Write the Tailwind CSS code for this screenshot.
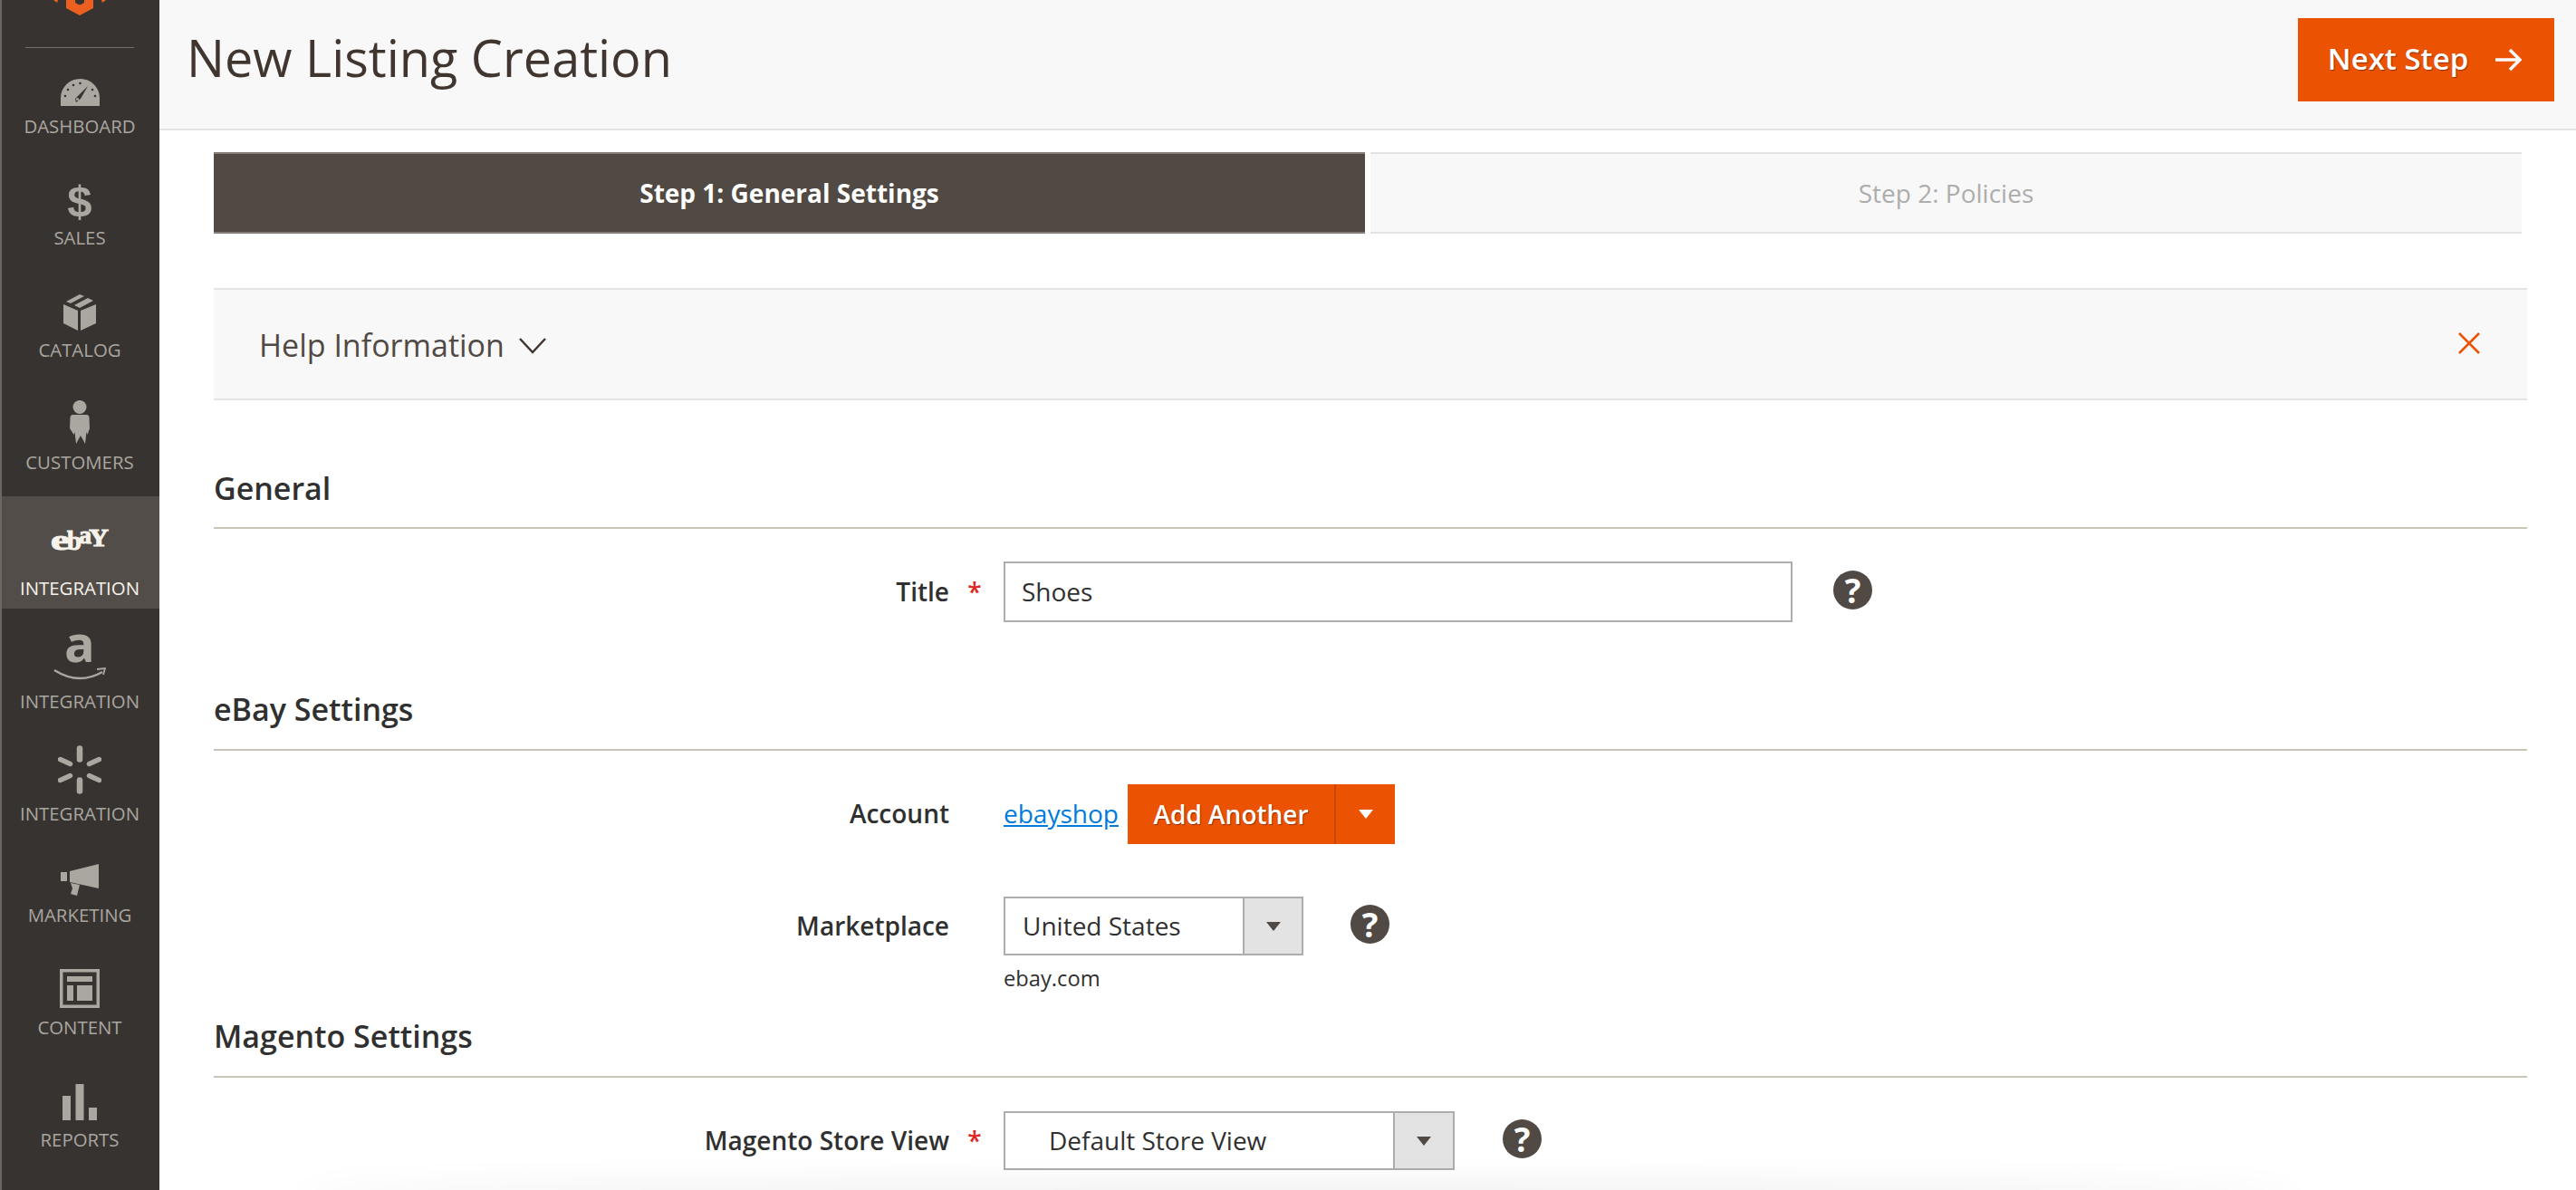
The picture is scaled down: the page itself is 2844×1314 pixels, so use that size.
<!DOCTYPE html>
<html lang="en">
<head>
    <meta charset="UTF-8">
    <title>New Listing Creation</title>
    <script src="https://cdn.jsdelivr.net/npm/@tailwindcss/browser@4"></script>
</head>
<body class="font-['Open_Sans',sans-serif] bg-white text-[#303030]">
<div class="flex h-[1314px] w-[2844px] overflow-hidden">

    <!-- sidebar -->
    <aside class="relative w-[176px] shrink-0 bg-[#373330] flex flex-col text-[20.4px] leading-[20px] text-[#aaa6a0] overflow-hidden">
        <div class="absolute inset-y-0 left-0 w-[2px] bg-[#6b6764]"></div>
        <div class="h-[54px] shrink-0 flex flex-col items-center">
            <svg class="shrink-0" width="60" height="17" viewBox="0 0 60 17" fill="#eb6020"><path fill-rule="evenodd" d="M15 0V9L30 17L45 9V0ZM25 0V3L30 5.500L35 3V0Z"/><path d="M1 0H6L5 3zM59 0H54L55 3z"/></svg>
            <div class="mt-[35px] w-[120px] h-[1px] bg-[#736e69]"></div>
        </div>

        <a class="h-[108px] shrink-0 flex flex-col items-center justify-end pb-[13px]">
            <svg class="mb-[12px]" width="43" height="30" viewBox="0 0 43 30"><path d="M0 30V21A21.5 21 0 0 1 43 21V30Z" fill="#aaa6a0"/><path d="M30 8l-8 14-5 4-1-4z" fill="#373330"/><circle cx="18.5" cy="22.5" r="1.6" fill="#aaa6a0"/><g fill="#373330"><circle cx="5" cy="19" r="1.3"/><circle cx="8" cy="12" r="1.3"/><circle cx="14" cy="7" r="1.3"/><circle cx="21.5" cy="5" r="1.3"/><circle cx="35" cy="12" r="1.3"/><circle cx="38" cy="19" r="1.3"/></g></svg>
            <span>DASHBOARD</span>
        </a>
        <a class="h-[123px] shrink-0 flex flex-col items-center justify-end pb-[13px]">
            <span class="mb-[10px] h-[40px] flex items-center font-['Liberation_Sans'] font-bold text-[49px] leading-none">$</span>
            <span>SALES</span>
        </a>
        <a class="h-[124px] shrink-0 flex flex-col items-center justify-end pb-[13px]">
            <svg class="mb-[11px]" width="36" height="40" viewBox="0 0 36 40" fill="#aaa6a0"><path d="M0 11l16 7v22L0 32z"/><path d="M36 11l-17 7v22l17-8z"/><path d="M3 8l15-8 5 2-15 8z"/><path d="M12 12l15-8 6 3-15 8z"/></svg>
            <span>CATALOG</span>
        </a>
        <a class="h-[124px] shrink-0 flex flex-col items-center justify-end pb-[13px]">
            <svg class="mb-[10px]" width="22" height="48" viewBox="0 0 22 48" fill="#aaa6a0"><circle cx="11" cy="7.5" r="7.5"/><path d="M3 16h16q2 0 2.500 3L22 31l-2.500 7-1-3-1.500 13-5-9-5 9-1.500-13-1 3L0 31l.5-12Q1 16 3 16z"/></svg>
            <span>CUSTOMERS</span>
        </a>
        <a class="mt-[15px] h-[124px] shrink-0 flex flex-col items-center justify-end pb-[13px] bg-[#524d49] text-[#f7f3eb]">
            <svg class="mb-[29px]" width="64" height="27" viewBox="0 0 64 27" fill="#f7f3eb" stroke="#f7f3eb" stroke-width="1" font-family="Liberation Serif" font-weight="700" style="overflow:visible"><text x="0" y="24" font-size="31" textLength="21" lengthAdjust="spacingAndGlyphs">e</text><text x="18" y="24" font-size="30" textLength="16" lengthAdjust="spacingAndGlyphs">b</text><text x="31" y="17" font-size="28" textLength="14" lengthAdjust="spacingAndGlyphs">a</text><text x="42" y="20" font-size="28" textLength="22" lengthAdjust="spacingAndGlyphs">Y</text></svg>
            <span>INTEGRATION</span>
        </a>
        <a class="h-[125px] shrink-0 flex flex-col items-center justify-end pb-[13px]">
            <span class="h-[35px] flex items-start text-[56px] leading-[19px] font-bold">a</span>
            <svg class="mb-[12px] mt-[1px]" width="58" height="16" viewBox="0 0 58 16" fill="none" stroke="#aaa6a0"><path d="M1 4Q28 21 54 6" stroke-width="2.500"/><path d="M48 3l9-1-2 7" stroke-width="1.800"/></svg>
            <span>INTEGRATION</span>
        </a>
        <a class="h-[124px] shrink-0 flex flex-col items-center justify-end pb-[13px]">
            <svg class="mb-[11px]" width="48" height="54" viewBox="0 0 48 54" stroke="#aaa6a0" stroke-linecap="round"><path stroke-width="6.500" d="M24 3.500v12M24 38.500v12"/><path stroke-width="5.500" d="M2.500 15.500l11 5M45.500 15.500l-11 5M2.500 38.500l11-5M45.500 38.500l-11-5"/></svg>
            <span>INTEGRATION</span>
        </a>
        <a class="h-[112px] shrink-0 flex flex-col items-center justify-end pb-[13px]">
            <svg class="mb-[11px]" width="42" height="35" viewBox="0 0 42 35" fill="#aaa6a0"><rect x="0" y="9" width="7" height="10"/><path d="M10 8L42 0v27L10 20z"/><path d="M11 21l10 2-3 12-7-2 2-6z"/></svg>
            <span>MARKETING</span>
        </a>
        <a class="h-[124px] shrink-0 flex flex-col items-center justify-end pb-[13px]">
            <svg class="mb-[11px]" width="44" height="43" viewBox="0 0 44 43" fill="#aaa6a0"><path fill-rule="evenodd" d="M0 0h44v43H0zM3.500 3.500v36h37v-36z"/><rect x="8" y="8" width="28" height="6"/><rect x="8" y="18" width="7" height="17"/><rect x="19" y="18" width="17" height="17"/></svg>
            <span>CONTENT</span>
        </a>
        <a class="h-[124px] shrink-0 flex flex-col items-center justify-end pb-[13px]">
            <svg class="mb-[11px]" width="38" height="40" viewBox="0 0 38 40" fill="#aaa6a0"><rect x="0" y="13" width="9" height="27"/><rect x="14.500" y="0" width="9" height="40"/><rect x="29" y="26" width="9" height="14"/></svg>
            <span>REPORTS</span>
        </a>
    </aside>

    <!-- main -->
    <main class="flex-1 min-w-0 relative">
        <header class="h-[144px] bg-[#f8f8f8] border-b-2 border-[#e3e3e3] flex items-center justify-between pl-[30px] pr-[24px] pb-[10px]">
            <h1 class="text-[55.8px] font-normal text-[#41362f] leading-none -mt-[4px]">New Listing Creation</h1>
            <button class="h-[92px] w-[283px] bg-[#eb5202] text-white text-[33px] font-semibold flex items-center justify-center gap-[29px] pr-[3px] [text-shadow:1px_1px_1px_#8f3200]">
                <span class="-mt-[2px]">Next Step</span>
                <svg width="30" height="26" viewBox="0 0 30 26" fill="none" stroke="white" stroke-width="3.500"><path d="M1 13h27M17 2l11 11-11 11"/></svg>
            </button>
        </header>

        <div class="pl-[60px] pr-[54px]">
            <!-- steps -->
            <div class="mt-[24px] flex gap-[6px] pr-[6px] h-[90px] text-[28px]">
                <div class="w-[1271px] bg-[#514943] border-y-2 border-[#857d77] text-white font-bold flex items-center justify-center">Step 1: General Settings</div>
                <div class="flex-1 bg-[#f8f8f8] border-y-2 border-[#e3e3e3] text-[#adadad] flex items-center justify-center">Step 2: Policies</div>
            </div>

            <!-- help block -->
            <div class="mt-[60px] h-[124px] bg-[#f8f8f8] border-y-2 border-[#e3e3e3] flex items-center justify-between pl-[50px] pr-[52px] text-[#514943]">
                <div class="flex items-center gap-[16px] text-[34px]">
                    <span class="mt-[2px]">Help Information</span>
                    <svg class="mt-[4px]" width="30" height="18" viewBox="0 0 30 18" fill="none" stroke="#41362f" stroke-width="2.500"><path d="M1 1l14 15L29 1"/></svg>
                </div>
                <svg class="-mt-[3px]" width="24" height="24" viewBox="0 0 24 24" fill="none" stroke="#eb5202" stroke-width="2.500"><path d="M1 1l22 22M23 1L1 23"/></svg>
            </div>

            <!-- general -->
            <h2 class="mt-[76px] h-[66px] border-b-2 border-[#c9c5b8] text-[34px] font-semibold leading-[42px]">General</h2>
            <div class="mt-[36px] flex items-start">
                <div class="w-[812px] h-[67px] flex items-center justify-end text-[28px] font-semibold pb-[2px]">Title</div>
                <div class="w-[56px] h-[67px] flex items-center justify-center text-[#e22626] text-[28px] font-semibold pb-[2px]">*</div>
                <div class="ml-[4px] w-[871px] h-[67px] border-2 border-[#adadad] flex items-center pl-[18px] pb-[2px] text-[28px]">Shoes</div>
                <span class="ml-[45px] mt-[10px] w-[43px] h-[43px] rounded-full bg-[#514943] text-white font-bold text-[37px] leading-none flex items-center justify-center">?</span>
            </div>

            <!-- ebay settings -->
            <h2 class="mt-[75px] h-[67px] border-b-2 border-[#c9c5b8] text-[34px] font-semibold leading-[42px]">eBay Settings</h2>
            <div class="mt-[37px] flex items-center h-[66px]">
                <div class="w-[812px] text-right text-[28px] font-semibold pb-[2px]">Account</div>
                <div class="w-[60px]"></div>
                <a class="text-[28px] text-[#007bdb] underline w-[137px] pb-[2px]">ebayshop</a>
                <button class="h-[66px] w-[228px] bg-[#eb5202] text-white text-[28px] font-semibold pb-[1px] [text-shadow:1px_1px_1px_#8f3200]">Add Another</button>
                <button class="h-[66px] w-[67px] bg-[#eb5202] border-l-2 border-[#c64602] flex items-center justify-center">
                    <svg width="16" height="10" viewBox="0 0 16 10" fill="white"><path d="M0 0h16L8 10z"/></svg>
                </button>
            </div>
            <div class="mt-[58px] flex items-start">
                <div class="w-[812px] h-[65px] flex items-center justify-end text-[28px] font-semibold pb-[2px]">Marketplace</div>
                <div class="w-[60px]"></div>
                <div>
                    <div class="flex items-center">
                        <div class="w-[331px] h-[65px] border-2 border-[#adadad] flex text-[28px]">
                            <div class="flex-1 flex items-center pl-[19px] pb-[2px]">United States</div>
                            <div class="w-[65px] bg-[#e3e3e3] border-l-2 border-[#adadad] flex items-center justify-center"><svg width="16" height="10" viewBox="0 0 16 10" fill="#514943"><path d="M0 0h16L8 10z"/></svg></div>
                        </div>
                        <span class="ml-[52px] -mt-[4px] w-[43px] h-[43px] rounded-full bg-[#514943] text-white font-bold text-[37px] leading-none flex items-center justify-center">?</span>
                    </div>
                    <div class="mt-[9px] text-[23.7px] leading-[32px]">ebay.com</div>
                </div>
            </div>

            <!-- magento settings -->
            <h2 class="mt-[27px] h-[67px] border-b-2 border-[#c9c5b8] text-[34px] font-semibold leading-[42px]">Magento Settings</h2>
            <div class="mt-[37px] flex items-start">
                <div class="w-[812px] h-[65px] flex items-center justify-end text-[28px] font-semibold pb-[2px]">Magento Store View</div>
                <div class="w-[56px] h-[65px] flex items-center justify-center text-[#e22626] text-[28px] font-semibold pb-[2px]">*</div>
                <div class="ml-[4px] w-[498px] h-[65px] border-2 border-[#adadad] flex text-[28px]">
                    <div class="flex-1 flex items-center pl-[48px] pb-[2px]">Default Store View</div>
                    <div class="w-[66px] bg-[#e3e3e3] border-l-2 border-[#adadad] flex items-center justify-center"><svg width="16" height="10" viewBox="0 0 16 10" fill="#514943"><path d="M0 0h16L8 10z"/></svg></div>
                </div>
                <span class="ml-[53px] mt-[9px] w-[43px] h-[43px] rounded-full bg-[#514943] text-white font-bold text-[37px] leading-none flex items-center justify-center">?</span>
            </div>
        </div>

        <!-- shadow of the footer below the fold -->
        <div class="absolute left-[150px] right-[300px] bottom-[-12px] h-[12px] rounded-[100%] shadow-[0_0_36px_rgba(0,0,0,0.16)] pointer-events-none"></div>
    </main>
</div>
</body>
</html>
